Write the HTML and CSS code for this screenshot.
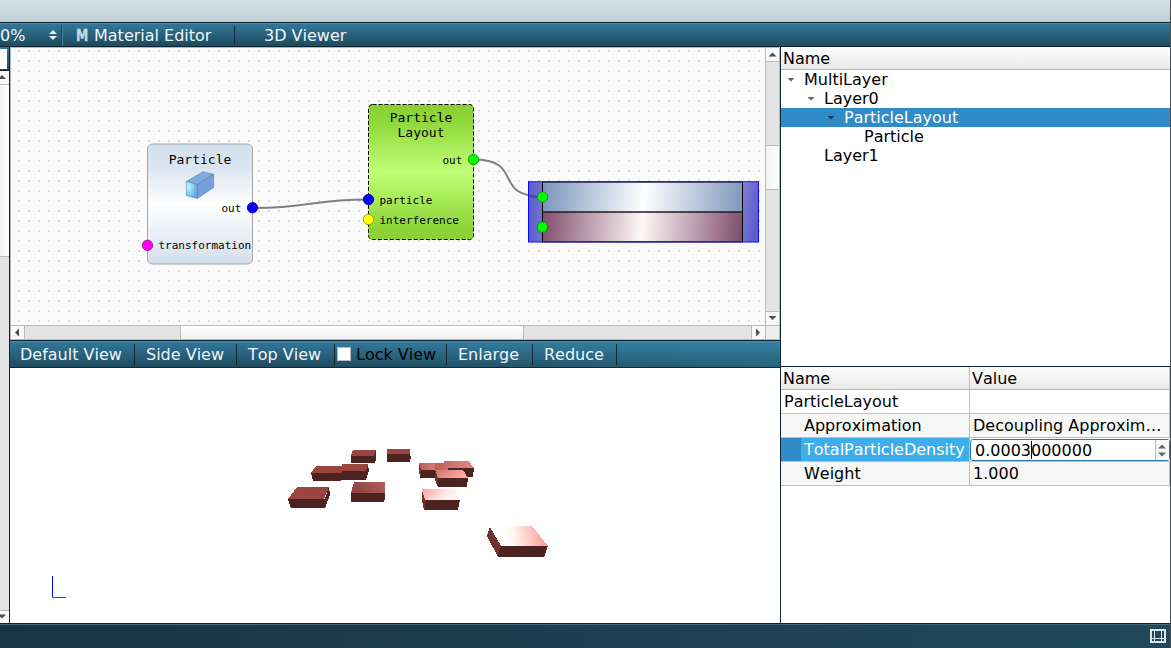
FILE: index.html
```html
<!DOCTYPE html>
<html lang="en">
<head>
<meta charset="utf-8">
<title>Sample designer</title>
<link rel="stylesheet" href="styles.css">
</head>
<body>
<div class="window">
  <div class="titlebar"></div>
  <div class="toolbar main-tools">
    <div class="zoom-box"><span>0%</span>
      <svg class="spin" width="8" height="10" viewBox="0 0 8 10"><path d="M4 0L8 4H0zM0 6H8L4 10z" fill="#e4ecef"/></svg>
    </div>
    <div class="material"><b class="m-icon">M</b><span>Material Editor</span></div>
    <div class="viewer">3D Viewer</div>
  </div>
  <div class="workspace">
    <div class="left">
      <div class="filter"><div class="filter-input"></div></div>
      <div class="vbar">
        <div class="arrow-btn up"><svg width="9" height="13" viewBox="0 0 9 13"><path d="M-2 8L2 4L6 8z" fill="#4c4c4c"/></svg></div>
        <div class="thumb left-thumb"></div>
        <div class="groove"></div>
        <div class="arrow-btn down"><svg width="9" height="12" viewBox="0 0 9 12"><path d="M-2 3.500H6L2 7.500z" fill="#4c4c4c"/></svg></div>
      </div>
    </div>
    <div class="center">
      <div class="scene">
        <svg class="canvas" width="755" height="277" viewBox="10 48 755 277">
          <defs>
            <pattern id="dots" x="18" y="50" width="10" height="10" patternUnits="userSpaceOnUse"><rect width="2" height="2" fill="#dcdcdc"/></pattern>
            <linearGradient id="pale" x2="0" y2="1"><stop stop-color="#d4e0ed"/><stop offset=".2" stop-color="#dbe5ef"/><stop offset=".5" stop-color="#fff"/><stop offset="1" stop-color="#d3dfec"/></linearGradient>
            <linearGradient id="green" x2="0" y2="1"><stop stop-color="#8ad233"/><stop offset=".1" stop-color="#8cd537"/><stop offset=".5" stop-color="#c0ff76"/><stop offset=".92" stop-color="#8cd436"/><stop offset="1" stop-color="#8ad233"/></linearGradient>
            <linearGradient id="blue" gradientUnits="userSpaceOnUse" x1="542" y1="182" x2="747" y2="202"><stop stop-color="#7994ba"/><stop offset=".5" stop-color="#fff"/><stop offset="1" stop-color="#7994ba"/></linearGradient>
            <linearGradient id="plum" gradientUnits="userSpaceOnUse" x1="540" y1="217" x2="744" y2="237"><stop stop-color="#7d4a6a"/><stop offset=".5" stop-color="#fff7f7"/><stop offset="1" stop-color="#7d4a6a"/></linearGradient>
            <linearGradient id="side" x2="1" y2="0"><stop stop-color="#5c5ccb"/><stop offset="1" stop-color="#7272d2"/></linearGradient>
            <linearGradient id="side2" x2="1" y2=".5"><stop stop-color="#8080d5"/><stop offset="1" stop-color="#5c5ccb"/></linearGradient>
            <radialGradient id="face" cx=".2" cy=".3" r=".9"><stop stop-color="#b5fbff"/><stop offset="1" stop-color="#5c98e0"/></radialGradient>
          </defs>
          <rect x="10" y="48" width="755" height="277" fill="#fafafa"/>
          <rect x="10" y="48" width="755" height="277" fill="url(#dots)"/>
          <g fill="none" stroke="#808080" stroke-width="2">
            <path d="M252.500 208C311 208 310 199.500 368.500 199.500"/>
            <path d="M473.500 159.500C525 159.500 491 196.500 543 196.500"/>
          </g>
          <rect x="147.500" y="144" width="105" height="120" rx="5" fill="url(#pale)" stroke="#a3a8ad"/>
          <g stroke="#4775b8" stroke-width=".5" stroke-linejoin="round">
            <path d="M186.300 181.500L203 171.700L213.700 174.300L197.500 184.500z" fill="#80a9dd"/>
            <path d="M197.500 184.500L213.700 174.300V187.500L197.500 198.500z" fill="#749fd8"/>
            <path d="M186.300 181.500L197.500 184.500V198.500L186.300 195.500z" fill="url(#face)"/>
          </g>
          <g class="node-title">
            <text x="200" y="164">Particle</text>
          </g>
          <g class="port-label">
            <text x="221.500" y="212">out</text>
            <text x="158.500" y="249">transformation</text>
          </g>
          <rect x="368.500" y="104.500" width="105" height="135" rx="4" fill="url(#green)" stroke="#000" stroke-dasharray="4 2"/>
          <g class="node-title">
            <text x="421" y="122">Particle</text>
            <text x="421" y="137">Layout</text>
          </g>
          <g class="port-label">
            <text x="442.500" y="164">out</text>
            <text x="379.500" y="204">particle</text>
            <text x="379.500" y="224">interference</text>
          </g>
          <g>
            <rect x="528.500" y="182" width="14" height="60" fill="url(#side)"/>
            <rect x="742.500" y="182" width="16" height="60" fill="url(#side2)"/>
            <path d="M529 195.500Q536 197.500 543 196.500" fill="none" stroke="#4444a5" stroke-width="2"/>
            <rect x="542" y="182" width="200.500" height="30" fill="url(#blue)"/>
            <rect x="542" y="212" width="200.500" height="30" fill="url(#plum)"/>
            <rect x="528.500" y="181.700" width="230" height="60.300" fill="none" stroke="#0a0aff"/>
            <path d="M542 182H743M542 241.700H743" stroke="#2c2f58" stroke-width="1.500"/>
            <path d="M542 212H743" stroke="#201820" stroke-width="1.600"/>
            <path d="M542.500 182V242M742.500 182V242" stroke="#000"/>
          </g>
          <g stroke-width=".8">
            <circle cx="252.500" cy="207.700" r="5.200" fill="#0000fe" stroke="#00008c"/>
            <circle cx="147.500" cy="245.300" r="5.200" fill="#f0f" stroke="#90008c"/>
            <circle cx="368.500" cy="199.500" r="5.200" fill="#0000fe" stroke="#00008c"/>
            <circle cx="368.500" cy="219.500" r="5.200" fill="#ff0" stroke="#8c8c00"/>
            <circle cx="473.500" cy="159.500" r="5.200" fill="#0f0" stroke="#008c00"/>
            <circle cx="542.500" cy="197" r="5.200" fill="#0f0" stroke="#008c00"/>
            <circle cx="542.500" cy="227" r="5.200" fill="#0f0" stroke="#008c00"/>
          </g>
        </svg>
        <div class="vbar scene-vbar">
          <div class="arrow-btn up"><svg width="13" height="13" viewBox="0 0 13 13"><path d="M2.500 8.500L6.500 4.500L10.500 8.500z" fill="#4c4c4c"/></svg></div>
          <div class="groove g1"></div>
          <div class="thumb t1"></div>
          <div class="groove"></div>
          <div class="arrow-btn down"><svg width="13" height="13" viewBox="0 0 13 13"><path d="M2.500 4H10.500L6.500 8z" fill="#4c4c4c"/></svg></div>
        </div>
        <div class="hbar">
          <div class="arrow-btn"><svg width="13" height="13" viewBox="0 0 13 13"><path d="M8 2.500V10.500L4 6.500z" fill="#4c4c4c"/></svg></div>
          <div class="groove h1"></div>
          <div class="thumb ht"></div>
          <div class="groove h2"></div>
          <div class="arrow-btn"><svg width="13" height="13" viewBox="0 0 13 13"><path d="M4 2.500V10.500L8 6.500z" fill="#4c4c4c"/></svg></div>
        </div>
        <div class="corner"></div>
      </div>
      <div class="toolbar view-tools">
        <div class="tool t-default">Default View</div>
        <div class="tool t-side">Side View</div>
        <div class="tool t-top">Top View</div>
        <div class="tool t-lock"><i class="check"></i><span>Lock View</span></div>
        <div class="tool t-enlarge">Enlarge</div>
        <div class="tool t-reduce">Reduce</div>
      </div>
      <svg class="view3d" width="770" height="255" viewBox="10 368 770 255" shape-rendering="crispEdges">
        <defs>
          <linearGradient id="r1" x2="1" y2=".3"><stop stop-color="#9c4842"/><stop offset="1" stop-color="#98443f"/></linearGradient>
          <linearGradient id="r2" x2="1" y2="-.3"><stop stop-color="#924542"/><stop offset="1" stop-color="#b56460"/></linearGradient>
          <linearGradient id="r3" x2="1" y2="0"><stop stop-color="#b85f5a"/><stop offset="1" stop-color="#e88a85"/></linearGradient>
          <linearGradient id="r4" x2="1" y2=".3"><stop stop-color="#cc706b"/><stop offset="1" stop-color="#ffaca6"/></linearGradient>
          <linearGradient id="r5" gradientUnits="userSpaceOnUse" x1="424" y1="488" x2="440" y2="506"><stop stop-color="#ff9f99"/><stop offset=".75" stop-color="#ffeae6"/><stop offset="1" stop-color="#fff2ee"/></linearGradient>
          <linearGradient id="r6" gradientUnits="userSpaceOnUse" x1="490" y1="540" x2="545" y2="532"><stop offset=".2" stop-color="#fff"/><stop offset=".4" stop-color="#fffaf5"/><stop offset="1" stop-color="#ff9b96"/></linearGradient>
        </defs>
        <g fill="#4c2321">
          <path d="M351 456H374L376 450V459L375 463H351z"/>
          <path d="M387 454H410L411 457L410 462H387z"/>
          <path d="M311 473H341V481H313z"/>
          <path d="M340 471H366L368 465L369 471L366 480H340z"/>
          <path d="M288 499H325L329 487L330 495L325 508H291z"/>
          <path d="M351 493H384L385 485V499L384 502H351z"/>
          <path d="M420 470H441V478H420z"/>
          <path d="M448 468H474L473 477H448z"/>
          <path d="M436 475L438 478H468L467 487H438z"/>
          <path d="M423 500H460L458 510H424z"/>
          <path d="M500 546H548L544 557H498z"/>
        </g>
        <path d="M353 450H376L374 456H351z" fill="url(#r1)"/>
        <path d="M387 449H410V454H387z" fill="url(#r1)"/>
        <path d="M316 466H342V473H311z" fill="url(#r1)"/>
        <path d="M342 464H368L366 471H340V469H342z" fill="url(#r1)"/>
        <path d="M297 487H329L324 499H288z" fill="url(#r1)"/>
        <path d="M354 482H385V493H351z" fill="url(#r2)"/>
        <path d="M419 463H444V470H421z" fill="url(#r3)"/>
        <path d="M444 461H469L474 468H448V470H435V463H444z" fill="url(#r3)"/>
        <path d="M435 470H463L468 478H438z" fill="url(#r4)"/>
        <path d="M422 489H455L460 500H425z" fill="url(#r5)"/>
        <path d="M419 463L421 470V478L419 473zM422 490L425 500V510H424L422 500zM435 471L438 478V487L435 480zM490 527L501 546L498 557L487 536z" fill="#70322e"/>
        <path d="M490 526H532L548 546H501z" fill="url(#r6)"/>
        <rect x="52" y="576" width="1" height="21" fill="#00f"/>
        <rect x="53" y="597" width="13" height="1" fill="#f00"/>
        <rect x="52" y="597" width="1" height="1" fill="#0c5"/>
      </svg>
    </div>
    <div class="right">
      <div class="tree">
        <div class="head">Name</div>
        <div class="row d0"><i class="tri"></i>MultiLayer</div>
        <div class="row d1"><i class="tri"></i>Layer0</div>
        <div class="row d2 selected"><i class="tri"></i>ParticleLayout</div>
        <div class="row d3">Particle</div>
        <div class="row d4">Layer1</div>
      </div>
      <div class="props">
        <div class="head prop-head"><span class="col">Name</span><span class="val">Value</span></div>
        <div class="prop"><span class="col top">ParticleLayout</span><span class="val"></span></div>
        <div class="prop alt"><span class="col">Approximation</span><span class="val">Decoupling Approxim…</span></div>
        <div class="prop active"><span class="col">TotalParticleDensity</span>
          <div class="editor"><span>0.0003<i class="caret"></i>000000</span>
            <div class="stepper"><svg width="13" height="20" viewBox="0 0 13 20"><path d="M2 8.500L6 4.500L10 8.500zM2 12.500H10L6 16.500z" fill="#666"/></svg></div>
          </div>
        </div>
        <div class="prop alt"><span class="col">Weight</span><span class="val">1.000</span></div>
      </div>
    </div>
  </div>
  <div class="statusbar">
    <svg width="16" height="14" viewBox="0 0 16 14"><path fill="#dfe4e7" fill-rule="evenodd" d="M0 0H16V14H0zM2 2V9H4V2zM5 2V9H11V2zM12 2V9H14V2zM2 10V12H4V10zM5 10V12H11V10zM12 10V12H14V10z"/></svg>
  </div>
</div>
</body>
</html>
```
FILE: styles.css
```css
* { box-sizing: border-box; }
body { margin: 0; overflow: hidden; font: 16px/19px "DejaVu Sans", sans-serif; font-kerning: none; color: #000; }
.window { width: 1171px; height: 648px; display: flex; flex-direction: column; border-right: 1px solid #474d50; background: #fff; white-space: nowrap; }
.titlebar { height: 22px; background: linear-gradient(#d5e2e9, #bfced5); }
.toolbar { display: flex; border-top: 1px solid #0d2632; border-bottom: 1px solid #0d2632; background: linear-gradient(#4b8ba8 0 1px, #31789a 1px, #1f4a5e 100%); color: #f0f5f7; }
.main-tools { height: 25px; padding-top: 2px; }
.zoom-box { width: 62px; height: 21px; display: flex; justify-content: space-between; align-items: center; padding-right: 4px; border-right: 1px solid #1a4558; box-shadow: 1px 0 #4683a0; }
.spin { flex: none; margin-bottom: 1px; }
.material { width: 173px; height: 18px; margin-top: 1px; padding-left: 14px; display: flex; gap: 6px; border-right: 1px solid #0d2632; line-height: 20px; }
.m-icon { width: 12px; color: #cdd6db; font-size: 15px; line-height: 20px; -webkit-text-stroke: .4px #cdd6db; transform: scaleX(.82); transform-origin: left; }
.viewer { padding-left: 29px; line-height: 22px; }
.workspace { height: 576px; display: grid; grid-template-columns: 10px 771px 1fr; }
.left { border-right: 1px solid #0d2632; display: flex; flex-direction: column; overflow: hidden; }
.filter { height: 24px; padding-top: 2px; padding-right: 2px; border-bottom: 1px solid #0d2632; background: linear-gradient(#31789a, #1f4a5e); }
.filter-input { height: 20px; background: #fff; }
.vbar { flex: 1; display: flex; flex-direction: column; background: #e4e4e4; }
.groove { flex: 1; background: #e4e4e4; }
.arrow-btn { flex: none; background: #f8f8f8; display: flex; }
.up { height: 14px; border-bottom: 1px solid #b9bab9; }
.down { height: 13px; border-top: 1px solid #b9bab9; }
.thumb { background: linear-gradient(90deg, #f1f1f1, #fff); border-bottom: 1px solid #b9bab9; }
.left-thumb { height: 172px; }
.center { display: flex; flex-direction: column; border-right: 1px solid #0d2632; }
.scene { height: 293px; display: grid; grid-template-columns: 755px 15px; grid-template-rows: 277px 15px; border-top: 1px solid #b4b5b5; box-shadow: inset 1px 0 #b4b5b5; }
.canvas { display: block; clip-path: inset(0 0 0 1px); }
.node-title { font: 13px "DejaVu Sans Mono", monospace; text-anchor: middle; }
.port-label { font: 11px "DejaVu Sans Mono", monospace; }
.scene-vbar { border-left: 1px solid #b9bab9; border-right: 1px solid #b9bab9; }
.g1 { flex: 0 0 83px; }
.t1 { height: 45px; border-top: 1px solid #b9bab9; }
.scene-vbar .down { height: 14px; }
.hbar { display: flex; margin-left: 1px; border-top: 1px solid #b9bab9; border-bottom: 1px solid #b9bab9; }
.hbar .arrow-btn { width: 14px; }
.hbar .arrow-btn:first-child { border-right: 1px solid #b9bab9; }
.hbar .arrow-btn:last-child { border-left: 1px solid #b9bab9; }
.h1 { flex: 0 0 155px; }
.ht { width: 344px; border: solid #b9bab9; border-width: 0 1px; background: linear-gradient(#fff, #f1f1f1); }
.corner { background: #eee; border: 1px solid #b9bab9; }
.view-tools { height: 28px; background: linear-gradient(90deg, transparent 40%, rgba(60, 150, 185, .3)), linear-gradient(#4b8ba8 0 1px, #31789a 1px, #1f4a5e 100%); }
.tool { height: 21px; margin-top: 3px; border-right: 1px solid #0d2632; line-height: 21px; padding-left: 11px; }
.t-default { width: 125px; padding-left: 10px; }
.t-side { width: 102px; }
.t-top { width: 98px; }
.t-lock { width: 112px; padding-left: 2px; display: flex; align-items: center; gap: 5px; color: #000; }
.check { width: 14px; height: 14px; margin-top: -1px; background: #fff; border: 1px solid #b9bab9; }
.t-enlarge { width: 86px; }
.t-reduce { width: 84px; }
.view3d { display: block; background: #fff; }
.right { display: flex; flex-direction: column; overflow: hidden; }
.tree { height: 319px; }
.head { height: 23px; padding-left: 2px; line-height: 23px; background: linear-gradient(#fdfdfd, #ebebeb); border-bottom: 1px solid #b2b2b2; }
.row { height: 19px; display: flex; align-items: center; gap: 9px; line-height: 19px; }
.d0 { padding-left: 6px; }
.d1 { padding-left: 26px; }
.d2 { padding-left: 46px; }
.d3 { padding-left: 83px; }
.d4 { padding-left: 43px; }
.tri { width: 8px; height: 4px; background: #666; clip-path: polygon(0 0, 100% 0, 50% 100%); }
.selected { background: #308cc6; color: #fff; }
.selected .tri { background: #123a52; }
.props { border-top: 1px solid #0d2632; }
.prop { height: 24px; display: flex; border-bottom: 1px solid #bfbfbf; line-height: 24px; }
.prop .col { padding-left: 23px; }
.prop .top { padding-left: 3px; }
.col { width: 189px; flex: none; border-right: 1px solid #bfbfbf; }
.val { flex: 1; padding-left: 3px; border-right: 1px solid #bfbfbf; }
.prop-head { display: flex; padding: 0; }
.prop-head .col, .prop-head .val { padding-left: 2px; }
.alt { background: #f7f7f7; }
.active .col { background: linear-gradient(90deg, #308cc6 20px, #3daee9 20px); color: #fff; }
.editor { flex: 1; height: 22px; margin-top: 1px; padding-left: 4px; display: flex; justify-content: space-between; border: 1px solid #2b77a6; border-radius: 3px; line-height: 21px; background: #fff; }
.editor > span { position: relative; }
.caret { position: absolute; top: 1px; width: 1px; height: 18px; background: #000; }
.stepper { width: 14px; border-left: 1px solid #b9bab9; background: #f7f7f7; }
.statusbar { height: 25px; display: flex; justify-content: flex-end; padding: 5px 4px 0 0; border-top: 1px solid #0d2632; box-shadow: inset 0 1px #47687a; background: linear-gradient(90deg, #163545, #20495c); }
```
